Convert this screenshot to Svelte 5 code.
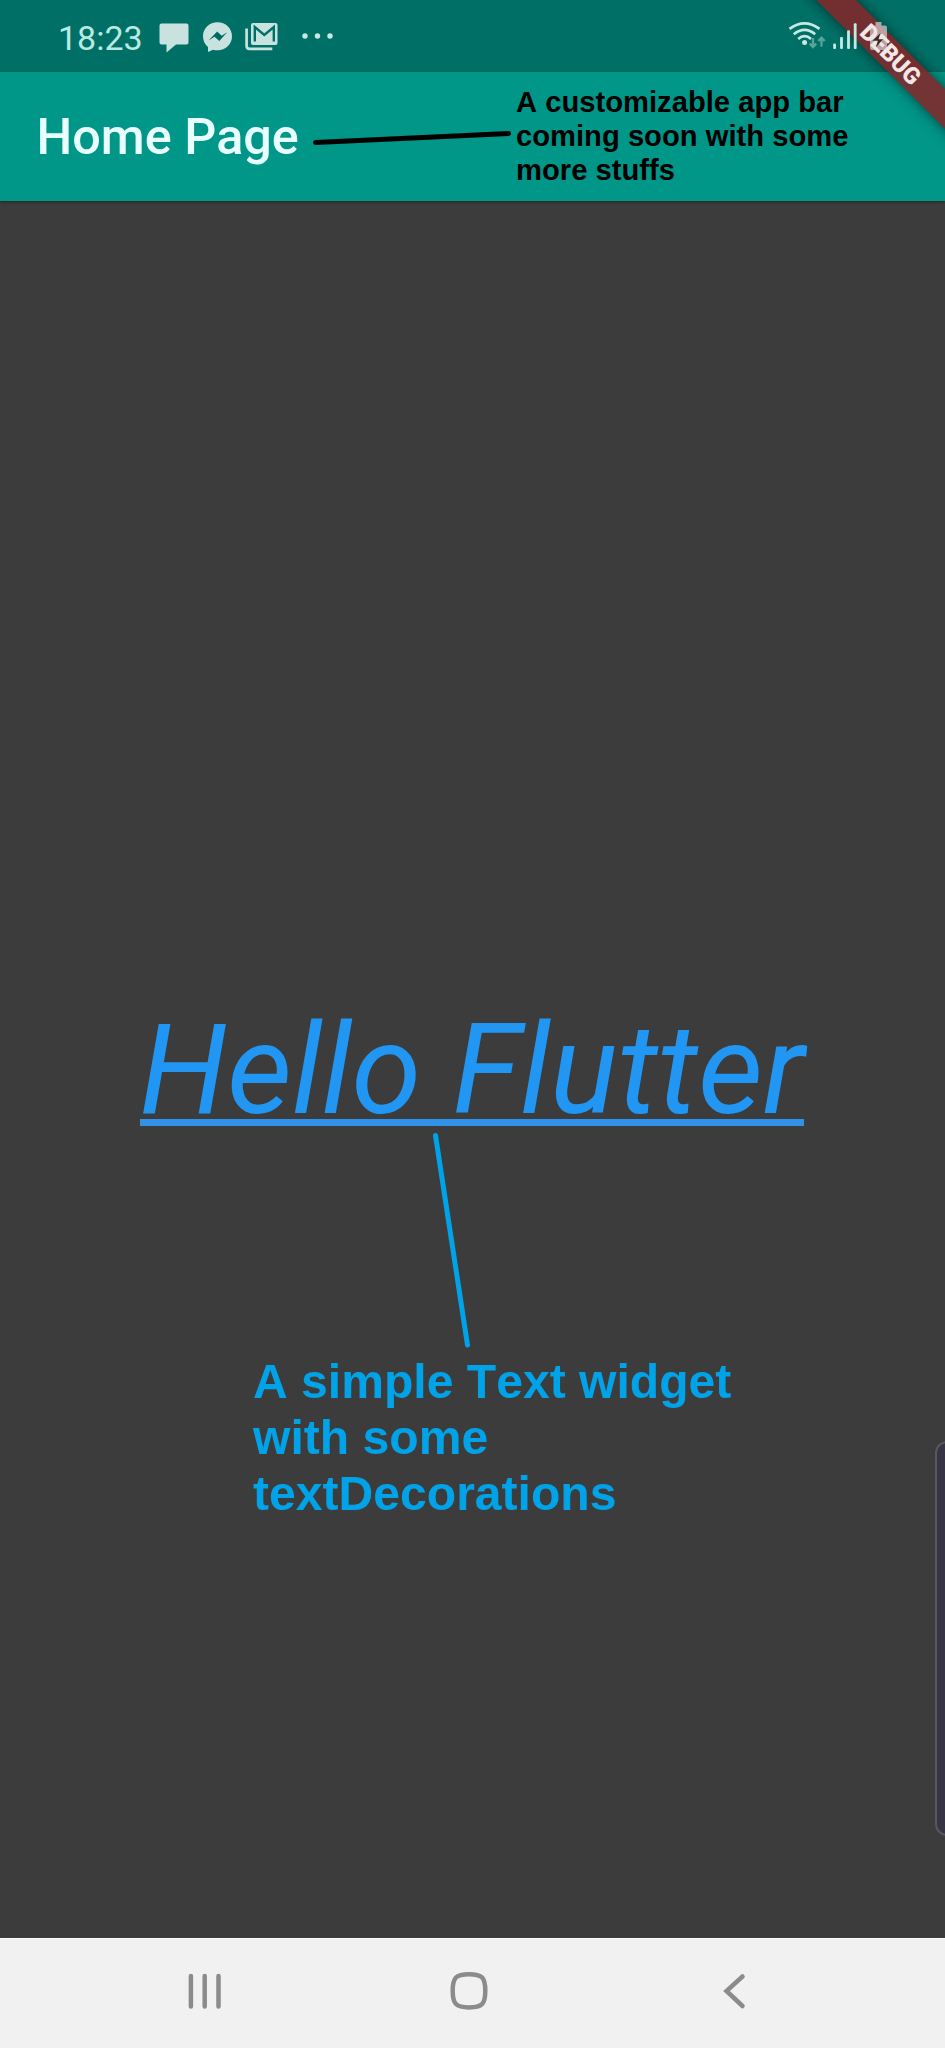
<script>
  const levels = [
    { x: 833.2, y: 43.5 },
    { x: 840.1, y: 37 },
    { x: 847.1, y: 30.3 },
    { x: 853.8, y: 23.3 },
  ];
</script>

<div class="phone">
  <header class="status">
    <span class="time">18:23</span>
    <svg class="notifications" width="180" height="72" viewBox="153 0 180 72">
      <path fill="#c8e3df" d="M161.500 23.500h25q2 0 2 2v17q0 2-2 2h-10.500l-9.500 8v-8h-5q-2 0-2-2v-17q0-2 2-2z" />
      <path fill="#c8e3df" d="M217.500 22.300c-8 0-14.500 6-14.500 14 0 4.500 2 8.300 5 10.800v5l5-2.400c1.400.4 3 .6 4.500.6 8 0 14.500-6 14.500-14s-6.500-14-14.500-14z" />
      <path fill="#00695f" d="M208.500 40.500l8.700-9 4.500 4.300 5.500-3.600-7.900 8.800-4.800-4.300z" />
      <path fill="none" stroke="#c8e3df" stroke-width="2.700" d="M246.600 28.500v17.500q0 2.800 2.800 2.800h22.900" />
      <rect x="251" y="23" width="26.500" height="22" rx="2" fill="#c8e3df" />
      <path fill="none" stroke="#007066" stroke-width="2.400" d="M254.800 41.500V27l9.500 8 9.500-8v14.500" />
      <g fill="#c8e8e5"><circle cx="305" cy="36" r="2.700" /><circle cx="317.500" cy="36" r="2.700" /><circle cx="330" cy="36" r="2.700" /></g>
    </svg>
    <svg class="signals" width="110" height="72" viewBox="785 0 110 72">
      <g fill="none" stroke="#c8e8e5" stroke-width="2.700">
        <path d="M789.500 28.900q15-11 30 0" />
        <path d="M793.800 34.200q10.700-8.500 21.400 0" />
        <path d="M798.200 38.900q6.400-5.500 12.800 0" />
      </g>
      <circle cx="804.600" cy="42.600" r="2.500" fill="#c8e8e5" />
      <g fill="none" stroke="#58a49b" stroke-width="2.300">
        <path d="M813 38v9M809.800 43.600l3.200 3.400 3.200-3.400M821.500 46.500v-9M818.300 41l3.200-3.400 3.200 3.400" />
      </g>
      {#each levels as bar}
        <rect x={bar.x} y={bar.y} width="2.800" height={49 - bar.y} rx="1" fill="#c8e8e5" />
      {/each}
      <path fill="#e6e8e6" fill-opacity="0.620" d="M875.500 22h6v3.500h3.500q2 0 2 2v20.500q0 2-2 2h-13q-2 0-2-2v-20.500q0-2 2-2h3.500z" />
      <path fill="#3c2a2b" d="M880.500 33l-8 7.800h5.300l-1.800 6.500 7-8h-4.500z" />
    </svg>
  </header>

  <div class="appbar">
    <h1>Home Page</h1>
    <p>A customizable app bar<br />coming soon with some<br />more stuffs</p>
  </div>

  <main>
    <div class="hello">Hello Flutter</div>
    <p>A simple Text widget<br />with some<br />textDecorations</p>
  </main>

  <nav>
    <svg width="40" height="44" viewBox="0 0 40 44"><path d="M5.900 7v30.500M19.700 7v30.500M33.500 7v30.500" /></svg>
    <svg width="40" height="44" viewBox="0 0 40 44"><path d="M20 5.200c13 0 16.300 3 16.300 16.600S33 38.400 20 38.400 3.700 35 3.700 21.800 7 5.200 20 5.200z" /></svg>
    <svg width="40" height="44" viewBox="0 0 40 44"><path stroke-linejoin="miter" d="M29.500 7.500L13.500 22l16 15" /></svg>
  </nav>

  <svg class="pointers" width="945" height="2048" viewBox="0 0 945 2048">
    <path stroke="#000" d="M315.500 142.500L508.500 133.500" />
    <path stroke="#00a2e8" d="M435.500 1135.500L467.500 1345" />
  </svg>
  <div class="edge"></div>
  <div class="corner"><div class="ribbon">DEBUG</div></div>
</div>

<style>
  :global(body) { margin: 0; background: #3c3c3c; }
  .phone {
    position: relative;
    display: flex;
    flex-direction: column;
    width: 945px;
    height: 2048px;
    overflow: hidden;
    background: #3c3c3c;
    font-family: Roboto, "Liberation Sans", sans-serif;
  }
  .status {
    display: flex;
    align-items: center;
    height: 72px;
    flex: none;
    box-sizing: border-box;
    padding: 0 50px 0 58px;
    background: #007066;
  }
  .time { width: 95px; font-size: 34px; line-height: 72px; padding-top: 3px; color: #b9e9e3; white-space: nowrap; }
  .signals { position: relative; z-index: 2; margin-left: auto; }
  .appbar {
    display: flex;
    justify-content: space-between;
    height: 129px;
    flex: none;
    box-sizing: border-box;
    padding: 0 86px 0 36.500px;
    background: #009688;
    box-shadow: 0 1px 3px rgba(0, 0, 0, 0.4);
  }
  h1 { margin: 0; font-size: 50.400px; font-weight: 500; line-height: 129px; color: #e9ffff; white-space: nowrap; }
  .appbar p { width: 343px; margin: 13px 0 0; font: bold 29.200px/34px "Liberation Sans", sans-serif; font-kerning: none; color: #000; white-space: nowrap; }
  main { display: flex; flex-direction: column; flex: 1; padding-top: 795px; }
  .hello {
    align-self: flex-start;
    margin-left: 139.500px;
    height: 130px;
    box-sizing: border-box;
    border-bottom: 7px solid #3093e8;
    font-size: 126.400px;
    font-style: italic;
    line-height: 148px;
    color: #2196f3;
    white-space: nowrap;
  }
  main p { margin: 227px 0 0 253px; font: bold 48.100px/56px "Liberation Sans", sans-serif; font-kerning: none; color: #00a2e8; white-space: nowrap; }
  nav {
    display: flex;
    justify-content: space-between;
    align-items: flex-start;
    height: 110px;
    flex: none;
    box-sizing: border-box;
    padding: 30px 192px 0 185px;
    background: #f1f1f1;
    border-top: 1px solid #fff;
  }
  nav svg { fill: none; stroke: #8b8b8b; stroke-width: 4.500; stroke-linecap: round; }
  .pointers { position: absolute; inset: 0; fill: none; stroke-width: 5; stroke-linecap: round; }
  .edge {
    position: absolute;
    left: 935px;
    top: 1441px;
    width: 30px;
    height: 395px;
    box-sizing: border-box;
    border: 2px solid #58575c;
    border-radius: 12px;
    background: #373445;
  }
  .corner { position: absolute; top: 0; right: 0; width: 220px; height: 220px; overflow: hidden; }
  .ribbon {
    position: absolute;
    left: 70px;
    top: 63px;
    width: 300px;
    height: 28px;
    transform: rotate(45deg);
    transform-origin: 150px -63px;
    background: rgba(134, 36, 40, 0.86);
    box-shadow: 0 0 14px rgba(0, 0, 0, 0.55);
    color: #f3e6e6;
    font-size: 23.400px;
    font-weight: 900;
    line-height: 28px;
    text-align: center;
  }
</style>
